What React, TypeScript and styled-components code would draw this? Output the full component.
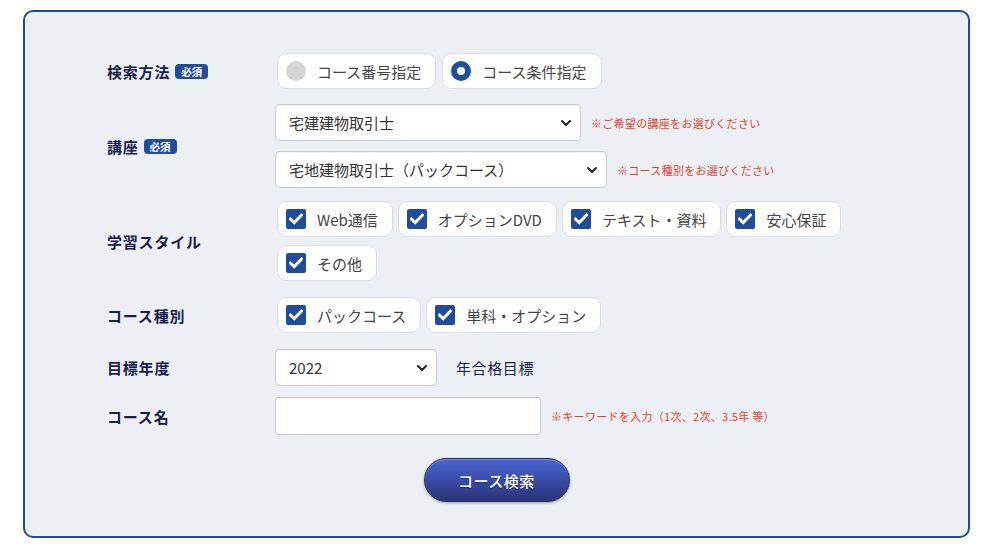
import React from "react";
import styled, { createGlobalStyle } from "styled-components";

const GlobalStyle = createGlobalStyle`
  html, body { margin: 0; padding: 0; background: #ffffff; }
  body { font-family: "Noto Sans CJK JP", "Noto Sans", sans-serif; }
  * { box-sizing: border-box; }
`;

const Page = styled.div`
  padding: 10px 0 0 23px;
`;

const Panel = styled.div`
  width: 947px;
  height: 528px;
  border: 2px solid #1f4c9b;
  border-radius: 10px;
  background: #ecf0f5;
  padding: 41px 0 0;
`;

const Form = styled.div`
  display: flex;
  flex-direction: column;
  padding-left: 82px;
`;

const Row = styled.div<{ $mt?: number }>`
  display: flex;
  align-items: center;
  margin-top: ${(p) => p.$mt ?? 0}px;
`;

const Label = styled.div`
  width: 168px;
  flex: none;
  display: flex;
  align-items: center;
  font-size: 15px;
  font-weight: 700;
  letter-spacing: 0.8px;
  color: #191c4c;
`;

const Badge = styled.span`
  display: inline-flex;
  align-items: center;
  justify-content: center;
  margin-left: 5px;
  height: 15px;
  padding: 0 6px;
  border-radius: 4px;
  background: #1f4c9b;
  color: #ffffff;
  font-size: 10.5px;
  font-weight: 700;
  letter-spacing: 0;
`;

const Controls = styled.div<{ $gap?: number; $col?: boolean; $ml?: number }>`
  display: flex;
  flex-direction: ${(p) => (p.$col ? "column" : "row")};
  flex-wrap: wrap;
  gap: ${(p) => p.$gap ?? 5}px;
  margin-left: ${(p) => p.$ml ?? 0}px;
`;

const ChoiceRows = styled.div`
  display: flex;
  flex-direction: column;
  gap: 8px;
  margin-left: 2px;
`;

const Choice = styled.label`
  display: inline-flex;
  align-items: center;
  height: 36px;
  padding: 0 14px 0 8px;
  background: #ffffff;
  border: 1px solid #d9dde3;
  border-radius: 9px;
  font-size: 15px;
  color: #454545;
  white-space: nowrap;
`;

const ChoiceText = styled.span`
  margin-left: 11px;
`;

const RadioDot = styled.span<{ $on?: boolean }>`
  width: 20px;
  height: 20px;
  border-radius: 50%;
  flex: none;
  background: ${(p) => (p.$on ? "#1f4c9b" : "#d6d6d6")};
  display: inline-flex;
  align-items: center;
  justify-content: center;
  &::after {
    content: "";
    display: ${(p) => (p.$on ? "block" : "none")};
    width: 8px;
    height: 8px;
    border-radius: 50%;
    background: #ffffff;
  }
`;

const CheckBox = styled.span`
  width: 20px;
  height: 20px;
  flex: none;
  border-radius: 2px;
  background: #1f4c9b;
  display: inline-flex;
  align-items: center;
  justify-content: center;
`;

const SelectLine = styled.div`
  display: flex;
  align-items: center;
`;

const SelectWrap = styled.div<{ $w: number }>`
  position: relative;
  width: ${(p) => p.$w}px;
  height: 37px;
`;

const Select = styled.select`
  appearance: none;
  -webkit-appearance: none;
  width: 100%;
  height: 100%;
  padding: 0 30px 0 13px;
  border: 1px solid #c9cbcf;
  border-radius: 4px;
  background: #ffffff;
  box-shadow: inset 0 1px 2px rgba(0, 0, 0, 0.06);
  font-family: inherit;
  font-size: 15px;
  color: #333333;
  outline: none;
`;

const Chevron = styled.svg`
  position: absolute;
  right: 9px;
  top: 50%;
  margin-top: -4px;
  pointer-events: none;
`;

const Hint = styled.span`
  margin-left: 10px;
  font-size: 11px;
  color: #e5402d;
  letter-spacing: 0.3px;
  white-space: nowrap;
`;

const Suffix = styled.span`
  margin-left: 19px;
  font-size: 15px;
  color: #1b1e4f;
  letter-spacing: 0.6px;
`;

const TextInput = styled.input`
  width: 266px;
  height: 38px;
  border: 1px solid #c9cbcf;
  border-radius: 3px;
  background: #ffffff;
  box-shadow: inset 0 1px 2px rgba(0, 0, 0, 0.06);
  outline: none;
  font-family: inherit;
  font-size: 15px;
`;

const ButtonRow = styled.div`
  display: flex;
  justify-content: center;
  margin-top: 23px;
`;

const SearchButton = styled.button`
  width: 146px;
  height: 44px;
  border-radius: 22px;
  border: 1px solid #262c5e;
  background: linear-gradient(180deg, #4b66cf 0%, #3a4ca8 50%, #2a3373 100%);
  box-shadow: 0 1px 3px rgba(0, 0, 0, 0.35), inset 0 1px 0 rgba(255, 255, 255, 0.25);
  color: #ffffff;
  font-family: inherit;
  font-size: 15px;
  font-weight: 500;
  letter-spacing: 0.5px;
  text-shadow: 0 1px 1px rgba(0, 0, 0, 0.4);
  cursor: pointer;
`;

const Check = () => (
  <svg width="14" height="12" viewBox="0 0 14 12">
    <path d="M1.5 6.2 L5.2 9.6 L12.5 2.2" fill="none" stroke="#ffffff" strokeWidth="3" strokeLinecap="square" />
  </svg>
);

const ChevronIcon = () => (
  <Chevron width="12" height="8" viewBox="0 0 12 8">
    <path d="M2 2 L6 6 L10 2" fill="none" stroke="#222" strokeWidth="2" strokeLinecap="round" strokeLinejoin="round" />
  </Chevron>
);

const CheckItem = ({ text }: { text: string }) => (
  <Choice>
    <CheckBox>
      <Check />
    </CheckBox>
    <ChoiceText>{text}</ChoiceText>
  </Choice>
);

const SelectBox = ({ w, value }: { w: number; value: string }) => (
  <SelectWrap $w={w}>
    <Select defaultValue={value}>
      <option>{value}</option>
    </Select>
    <ChevronIcon />
  </SelectWrap>
);

export default function App() {
  return (
    <>
      <GlobalStyle />
      <Page>
        <Panel>
          <Form>
            <Row>
              <Label>
                検索方法<Badge>必須</Badge>
              </Label>
              <Controls $gap={6} $ml={2}>
                <Choice>
                  <RadioDot />
                  <ChoiceText>コース番号指定</ChoiceText>
                </Choice>
                <Choice>
                  <RadioDot $on />
                  <ChoiceText>コース条件指定</ChoiceText>
                </Choice>
              </Controls>
            </Row>

            <Row $mt={15}>
              <Label>
                講座<Badge>必須</Badge>
              </Label>
              <Controls $col $gap={10}>
                <SelectLine>
                  <SelectBox w={306} value="宅建建物取引士" />
                  <Hint>※ご希望の講座をお選びください</Hint>
                </SelectLine>
                <SelectLine>
                  <SelectBox w={332} value="宅地建物取引士（パックコース）" />
                  <Hint>※コース種別をお選びください</Hint>
                </SelectLine>
              </Controls>
            </Row>

            <Row $mt={13}>
              <Label>学習スタイル</Label>
              <ChoiceRows>
                <Controls>
                  <CheckItem text="Web通信" />
                  <CheckItem text="オプションDVD" />
                  <CheckItem text="テキスト・資料" />
                  <CheckItem text="安心保証" />
                </Controls>
                <Controls>
                  <CheckItem text="その他" />
                </Controls>
              </ChoiceRows>
            </Row>

            <Row $mt={16}>
              <Label>コース種別</Label>
              <Controls $ml={2}>
                <CheckItem text="パックコース" />
                <CheckItem text="単科・オプション" />
              </Controls>
            </Row>

            <Row $mt={16}>
              <Label>目標年度</Label>
              <SelectLine>
                <SelectBox w={162} value="2022" />
                <Suffix>年合格目標</Suffix>
              </SelectLine>
            </Row>

            <Row $mt={11}>
              <Label>コース名</Label>
              <SelectLine>
                <TextInput type="text" />
                <Hint>※キーワードを入力（1次、2次、3.5年 等）</Hint>
              </SelectLine>
            </Row>
          </Form>
          <ButtonRow>
            <SearchButton>コース検索</SearchButton>
          </ButtonRow>
        </Panel>
      </Page>
    </>
  );
}
